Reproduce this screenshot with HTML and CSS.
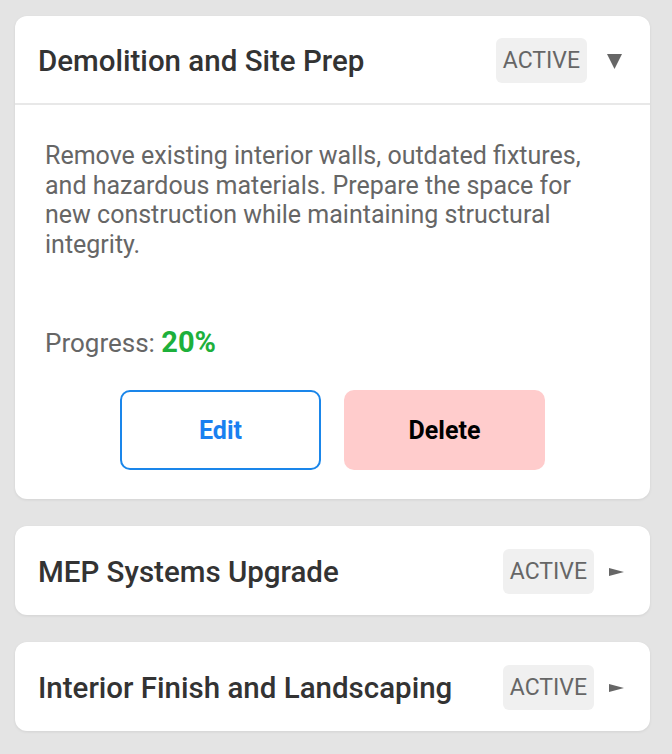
FILE: index.html
```html
<!DOCTYPE html>
<html lang="en">

<head>
  <meta charset="UTF-8">
  <meta name="viewport" content="width=device-width, initial-scale=1.0">
  <title>Project Phases</title>
  <link rel="stylesheet" href="styles.css">
</head>

<body>
  <div class="phase open">
    <div class="phase-head">
      <h3 class="phase-title">Demolition and Site Prep</h3>
      <span class="badge">ACTIVE</span>
      <svg class="arrow arrow-down" width="15" height="16" viewBox="0 0 15 16"><path d="M0 1h15L7.5 16z" fill="#666"/></svg>
    </div>
    <div class="phase-body">
      <p class="desc">Remove existing interior walls, outdated fixtures, and hazardous materials. Prepare the space for new construction while maintaining structural integrity.</p>
      <p class="progress">Progress: <b>20%</b></p>
      <div class="btns">
        <a href="javascript:;" class="btn btn-edit">Edit</a>
        <a href="javascript:;" class="btn btn-del">Delete</a>
      </div>
    </div>
  </div>

  <div class="phase">
    <div class="phase-head">
      <h3 class="phase-title">MEP Systems Upgrade</h3>
      <span class="badge">ACTIVE</span>
      <svg class="arrow" width="15" height="16" viewBox="0 0 15 16"><path d="M0 4l15 4-15 4z" fill="#666"/></svg>
    </div>
  </div>

  <div class="phase">
    <div class="phase-head">
      <h3 class="phase-title">Interior Finish and Landscaping</h3>
      <span class="badge">ACTIVE</span>
      <svg class="arrow" width="15" height="16" viewBox="0 0 15 16"><path d="M0 4l15 4-15 4z" fill="#666"/></svg>
    </div>
  </div>
</body>

</html>
```

FILE: styles.css
```css
html,
body {
  margin: 0;
  padding: 0;
}

body {
  background-color: #e4e4e4;
  font-family: Roboto, "Liberation Sans", sans-serif;
  padding: 16px 22px 0 15px;
}

a {
  text-decoration: none;
}

.phase {
  background-color: #fff;
  border-radius: 12px;
  box-shadow: 0 1px 3px rgba(0, 0, 0, 0.08);
  margin-bottom: 27px;
}

.phase-head {
  display: flex;
  align-items: center;
  height: 89px;
  padding: 2px 26px 0 23px;
  box-sizing: border-box;
}

.open .phase-head {
  border-bottom: 2px solid #e8e8e8;
}

.phase-title {
  flex: 1;
  margin: 0;
  font-size: 29.5px;
  font-weight: 500;
  color: #333;
}

.badge {
  background-color: #f0f0f0;
  color: #666;
  font-size: 23px;
  padding: 0 7px;
  height: 45px;
  line-height: 45px;
  border-radius: 6px;
}

.arrow {
  margin-left: 15px;
}

.arrow-down {
  margin-left: 20px;
  margin-right: 2px;
}

.phase-body {
  padding: 36px 30px 29px 30px;
}

.desc {
  margin: 0;
  font-size: 25px;
  line-height: 29.5px;
  color: #666;
}

.progress {
  margin: 68px 0 0 0;
  font-size: 26px;
  line-height: 30px;
  color: #666;
}

.progress b {
  color: #1db03b;
  font-size: 29px;
}

.btns {
  display: flex;
  justify-content: center;
  gap: 23px;
  margin-top: 32px;
}

.btn {
  width: 201px;
  height: 80px;
  box-sizing: border-box;
  border-radius: 10px;
  display: flex;
  align-items: center;
  justify-content: center;
  font-size: 25px;
  font-weight: 700;
}

.btn-edit {
  border: 2px solid #1a86ea;
  color: #1a80f0;
}

.btn-del {
  background-color: #ffcccc;
  color: #000;
}
```
